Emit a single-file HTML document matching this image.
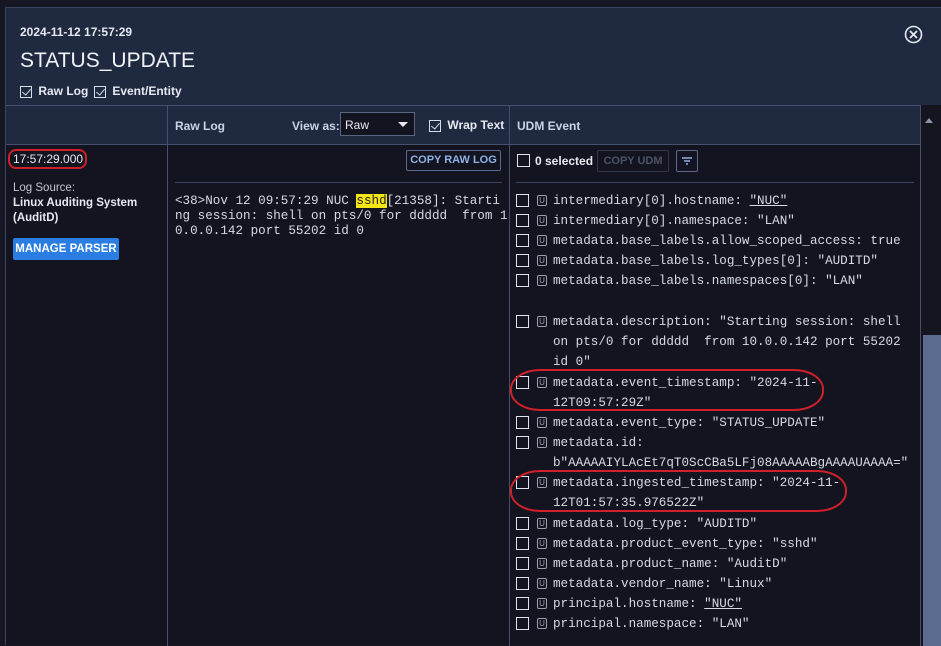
<!DOCTYPE html>
<html><head><meta charset="utf-8"><style>
*{box-sizing:border-box;margin:0;padding:0}
body{width:941px;height:645px;background:#161722;font-family:"Liberation Sans",sans-serif;color:#e6e9f0;position:relative;overflow:hidden}
.panel{position:absolute;left:5px;top:7px;width:936px;height:638px;background:#13141f;border-left:1px solid #3a4560;border-top:1px solid #3a4560}
.hdr{position:absolute;left:0;top:0;width:935px;height:97px;background:#1f2a41}
.date{position:absolute;left:14px;top:17px;font-size:12px;font-weight:bold}
.title{position:absolute;left:14px;top:41px;font-size:21px;color:#f0f2f6}
.cb{display:inline-block;width:12px;height:12px;border:1px solid #d8dce6;vertical-align:middle;position:relative}
.cb.on::after{content:"";position:absolute;left:3px;top:0px;width:4px;height:7px;border:solid #d8dce6;border-width:0 1.5px 1.5px 0;transform:rotate(40deg)}
.chk{position:absolute;top:76px;font-size:12px;font-weight:bold}
.chk .cb{margin-right:3px}
.colh{position:absolute;top:97px;height:40px;background:#1f2a41;border-top:1px solid #44506c;border-bottom:1px solid #44506c;font-size:12px;font-weight:bold;color:#c9d3e6}
.vl{position:absolute;top:97px;width:1px;height:541px;background:#44506c}
.mono{font-family:"Liberation Mono",monospace;font-size:12.6px;color:#d6dae4;white-space:pre}
.btn{position:absolute;border:1px solid #5a6a90;border-radius:2px;font-size:11px;font-weight:bold;color:#8fb2e6;text-align:center}
.row{position:absolute;left:516px;height:20px}
.row .cb{position:absolute;left:0;top:3px;width:13px;height:13px;border-color:#e0e3ea}
.u{position:absolute;left:21px;top:4px;width:10px;height:11px;border:1px solid #9aa0ad;border-radius:2px;font-size:8px;line-height:9px;text-align:center;color:#9aa0ad;font-family:"Liberation Sans",sans-serif}
.row .mono{position:absolute;left:37px;top:0;line-height:20px}
.ell{position:absolute;border:2px solid #d0202a;border-radius:30px/20px}
</style></head><body>
<div class="panel">
 <div class="hdr">
  <div class="date">2024-11-12 17:57:29</div>
  <div class="title">STATUS_UPDATE</div>
  <div class="chk" style="left:14px"><span class="cb on"></span> Raw Log</div>
  <div class="chk" style="left:88px"><span class="cb on"></span> Event/Entity</div>
  <svg style="position:absolute;left:898px;top:17px" width="19" height="19" viewBox="0 0 19 19"><circle cx="9.5" cy="9.5" r="8" fill="none" stroke="#e6e9f0" stroke-width="1.6"/><path d="M6 6L13 13M13 6L6 13" stroke="#e6e9f0" stroke-width="1.8"/></svg>
 </div>
 <div class="colh" style="left:0;width:915px"></div>
 <div style="position:absolute;left:169px;top:111px;font-size:12px;font-weight:bold;color:#c9d3e6">Raw Log</div>
 <div style="position:absolute;left:286px;top:111px;font-size:12px;font-weight:bold;color:#c9d3e6">View as:</div>
 <div style="position:absolute;left:334px;top:104px;width:75px;height:24px;border:1px solid #5a6580;background:#13141f;font-size:12px;padding:5px 4px;color:#e6e9f0">Raw<span style="position:absolute;right:6px;top:9px;border:5px solid transparent;border-top-color:#e6e9f0;border-bottom:0"></span></div>
 <div style="position:absolute;left:423px;top:110px;font-size:12px;font-weight:bold;color:#e6e9f0"><span class="cb on" style="margin-right:3px"></span> Wrap Text</div>
 <div style="position:absolute;left:511px;top:111px;font-size:12px;font-weight:bold;color:#c9d3e6">UDM Event</div>
 <div class="vl" style="left:161px"></div>
 <div class="vl" style="left:503px"></div>
 <div class="vl" style="left:914px"></div>
 <div style="position:absolute;left:915px;top:98px;width:21px;height:540px;background:#14151f"></div>
 <div style="position:absolute;left:919px;top:110px;border:4px solid transparent;border-bottom:5px solid #8a93a8;border-top:0"></div>
 <div style="position:absolute;left:917px;top:327px;width:18px;height:311px;background:#5c6c90"></div>

 <div style="position:absolute;left:7px;top:144px;font-size:12px;color:#e6e9f0">17:57:29.000</div>
 <div class="ell" style="left:2px;top:141px;width:79px;height:20px;border-radius:8px"></div>
 <div style="position:absolute;left:7px;top:173px;font-size:11.5px;line-height:15px;color:#c0c6d2">Log Source:<br><b style="color:#e6e9f0">Linux Auditing System<br>(AuditD)</b></div>
 <div style="position:absolute;left:7px;top:230px;width:106px;height:22px;background:#2a7de1;border-radius:2px;font-size:11.5px;font-weight:bold;line-height:22px;text-align:center;color:#fff">MANAGE PARSER</div>

 <div class="btn" style="left:400px;top:142px;width:95px;height:21px;line-height:19px">COPY RAW LOG</div>
 <div style="position:absolute;left:169px;top:174px;width:327px;height:1px;background:#3a4560"></div>
 <div class="mono" style="position:absolute;left:169px;top:186px;line-height:15px">&lt;38&gt;Nov 12 09:57:29 NUC <span style="background:#f5e416;color:#222">sshd</span>[21358]: Starti
ng session: shell on pts/0 for ddddd  from 1
0.0.0.142 port 55202 id 0</div>

 <span class="cb" style="position:absolute;left:511px;top:146px;width:13px;height:13px;border-color:#e0e3ea"></span>
 <div style="position:absolute;left:529px;top:146px;font-size:12px;font-weight:bold">0 selected</div>
 <div class="btn" style="left:591px;top:142px;width:72px;height:22px;line-height:20px;border-color:#30384c;color:#4a5468">COPY UDM</div>
 <div class="btn" style="left:670px;top:142px;width:22px;height:22px"><svg width="20" height="20" viewBox="0 0 20 20"><path d="M5 7h10M7 10h6M9 13h2" stroke="#8fb2e6" stroke-width="1.4"/></svg></div>
 <div style="position:absolute;left:510px;top:174px;width:398px;height:1px;background:#3a4560"></div>
</div>

<div class="row" style="top:191px"><span class="cb"></span><span class="u">U</span><span class="mono">intermediary[0].hostname: <u>"NUC"</u></span></div>
<div class="row" style="top:211px"><span class="cb"></span><span class="u">U</span><span class="mono">intermediary[0].namespace: "LAN"</span></div>
<div class="row" style="top:231px"><span class="cb"></span><span class="u">U</span><span class="mono">metadata.base_labels.allow_scoped_access: true</span></div>
<div class="row" style="top:251px"><span class="cb"></span><span class="u">U</span><span class="mono">metadata.base_labels.log_types[0]: "AUDITD"</span></div>
<div class="row" style="top:271px"><span class="cb"></span><span class="u">U</span><span class="mono">metadata.base_labels.namespaces[0]: "LAN"</span></div>
<div class="row" style="top:312px"><span class="cb"></span><span class="u">U</span><span class="mono">metadata.description: "Starting session: shell
on pts/0 for ddddd  from 10.0.0.142 port 55202
id 0"</span></div>
<div class="row" style="top:373px"><span class="cb"></span><span class="u">U</span><span class="mono">metadata.event_timestamp: "2024-11-
12T09:57:29Z"</span></div>
<div class="row" style="top:413px"><span class="cb"></span><span class="u">U</span><span class="mono">metadata.event_type: "STATUS_UPDATE"</span></div>
<div class="row" style="top:433px"><span class="cb"></span><span class="u">U</span><span class="mono">metadata.id:
b"AAAAAIYLAcEt7qT0ScCBa5LFj08AAAAABgAAAAUAAAA="</span></div>
<div class="row" style="top:473px"><span class="cb"></span><span class="u">U</span><span class="mono">metadata.ingested_timestamp: "2024-11-
12T01:57:35.976522Z"</span></div>
<div class="row" style="top:514px"><span class="cb"></span><span class="u">U</span><span class="mono">metadata.log_type: "AUDITD"</span></div>
<div class="row" style="top:534px"><span class="cb"></span><span class="u">U</span><span class="mono">metadata.product_event_type: "sshd"</span></div>
<div class="row" style="top:554px"><span class="cb"></span><span class="u">U</span><span class="mono">metadata.product_name: "AuditD"</span></div>
<div class="row" style="top:574px"><span class="cb"></span><span class="u">U</span><span class="mono">metadata.vendor_name: "Linux"</span></div>
<div class="row" style="top:594px"><span class="cb"></span><span class="u">U</span><span class="mono">principal.hostname: <u>"NUC"</u></span></div>
<div class="row" style="top:614px"><span class="cb"></span><span class="u">U</span><span class="mono">principal.namespace: "LAN"</span></div>

<div class="ell" style="left:510px;top:369px;width:314px;height:42px"></div>
<div class="ell" style="left:510px;top:470px;width:337px;height:42px"></div>
</body></html>
